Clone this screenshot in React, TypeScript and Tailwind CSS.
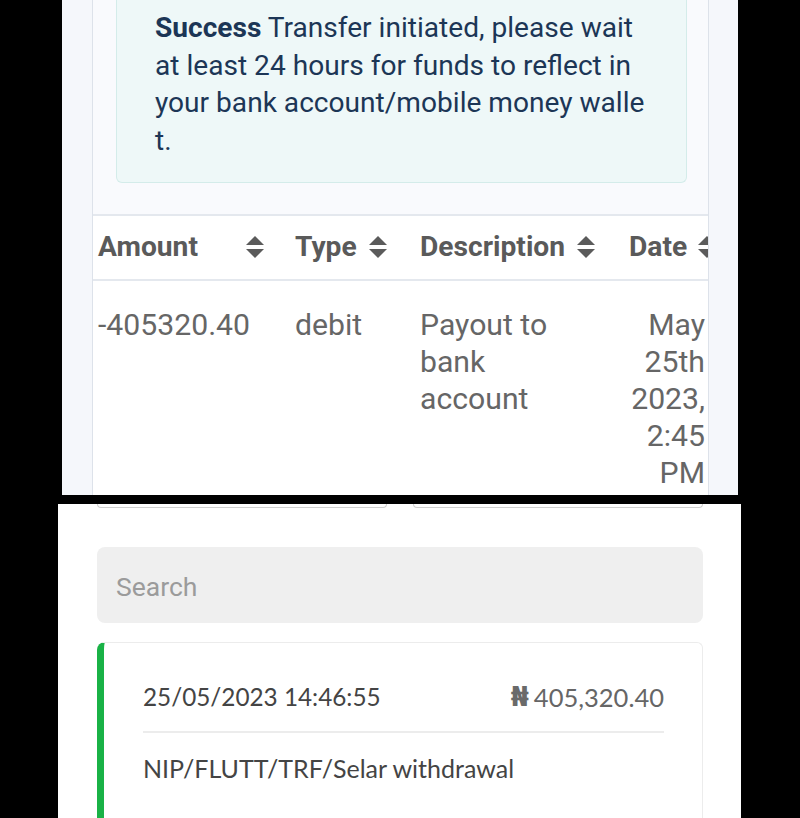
import React from "react";

function SortIcon({ className = "" }: { className?: string }) {
  return (
    <svg width="18" height="22" viewBox="0 0 18 22" className={className}>
      <path d="M9 0 L18 9 L0 9 Z" fill="#5b5b5b" />
      <path d="M0 13 L18 13 L9 22 Z" fill="#5b5b5b" />
    </svg>
  );
}

export default function App() {
  const roboto = { fontFamily: "Roboto, 'Noto Sans', sans-serif" };
  return (
    <div className="w-[800px] h-[818px] bg-black overflow-hidden" style={roboto}>
      {/* Top screenshot */}
      <div className="ml-[62px] w-[676px] h-[495px] bg-[#f5f7fb] flex">
        <div className="ml-[30px] w-[617px] h-full border-l border-r border-[#dde2ea] bg-[#f9fafd] flex flex-col overflow-hidden">
          <div className="pl-[23px] w-[594px]">
            <div className="bg-[#eef8f8] border border-t-0 border-[#d4ecea] rounded-b-md pl-[38px] pr-[10px] pt-[9px] pb-[23px] text-[28.1px] leading-[37.5px] text-[#1c3656] whitespace-nowrap">
              <span className="font-bold">Success</span> Transfer initiated, please wait
              <br />
              at least 24 hours for funds to reflect in
              <br />
              your bank account/mobile money walle
              <br />
              t.
            </div>
          </div>
          <div className="mt-[31px] bg-white border-t-2 border-[#e4e8ee] flex-1">
            <div className="flex h-[65px] items-center border-b-2 border-[#e4e8ee] text-[28.2px] font-bold text-[#5a5a5a] whitespace-nowrap">
              <div className="w-[197px] pl-[5px] pr-[26px] flex items-center">
                <span>Amount</span>
                <SortIcon className="ml-auto" />
              </div>
              <div className="w-[125px] pl-[5px] flex items-center gap-[12px]">
                <span>Type</span>
                <SortIcon />
              </div>
              <div className="w-[209px] pl-[5px] flex items-center gap-[12px]">
                <span>Description</span>
                <SortIcon />
              </div>
              <div className="w-[84px] pl-[5px] flex items-center gap-[11px] overflow-hidden">
                <span>Date</span>
                <SortIcon className="shrink-0" />
              </div>
            </div>
            <div className="flex pt-[25px] text-[30.2px] leading-[37px] text-[#666666]">
              <div className="w-[197px] pl-[5px]">-405320.40</div>
              <div className="w-[125px] pl-[5px]">debit</div>
              <div className="w-[209px] pl-[5px]">
                Payout to
                <br />
                bank
                <br />
                account
              </div>
              <div className="w-[84px] pr-[3px] text-right">
                May
                <br />
                25th
                <br />
                2023,
                <br />
                2:45
                <br />
                PM
              </div>
            </div>
          </div>
        </div>
      </div>

      {/* Black gap */}
      <div className="h-[9px]" />

      {/* Bottom screenshot */}
      <div className="ml-[58px] w-[683px] h-[314px] bg-white flex flex-col">
        <div className="flex pl-[39px] gap-[26px]">
          <div className="w-[290px] h-[4px] border border-t-0 border-[#cfcfcf] rounded-b-md" />
          <div className="w-[290px] h-[4px] border border-t-0 border-[#cfcfcf] rounded-b-md" />
        </div>
        <div className="mt-[39px] ml-[39px] w-[606px] h-[76px] bg-[#efefef] rounded-lg flex items-center pl-[19px] pt-[4px] text-[26.5px] text-[#9b9b9b]">
          Search
        </div>
        <div
          className="mt-[19px] ml-[39px] w-[606px] flex-1 border border-b-0 border-[#ececec] border-l-[7px] border-l-[#19b246] rounded-tl-lg rounded-tr-md pl-[39px] pr-[38px]"
          style={{ fontFamily: "Lato, 'DejaVu Sans', sans-serif" }}
        >
          <div className="h-[90px] flex items-center justify-between border-b-2 border-[#ececec] pt-[20px] text-[#444444]">
            <span className="text-[24.3px]">25/05/2023 14:46:55</span>
            <span className="text-[25.5px] text-[#666666] flex items-center">
              <span style={{ fontFamily: "'DejaVu Sans', sans-serif" }} className="text-[26px] font-bold mr-[5px] text-[#6a6a6a]">₦</span>
              <span>405,320.40</span>
            </span>
          </div>
          <div className="pt-[17px] text-[25px] text-[#444444]">NIP/FLUTT/TRF/Selar withdrawal</div>
        </div>
      </div>
    </div>
  );
}
